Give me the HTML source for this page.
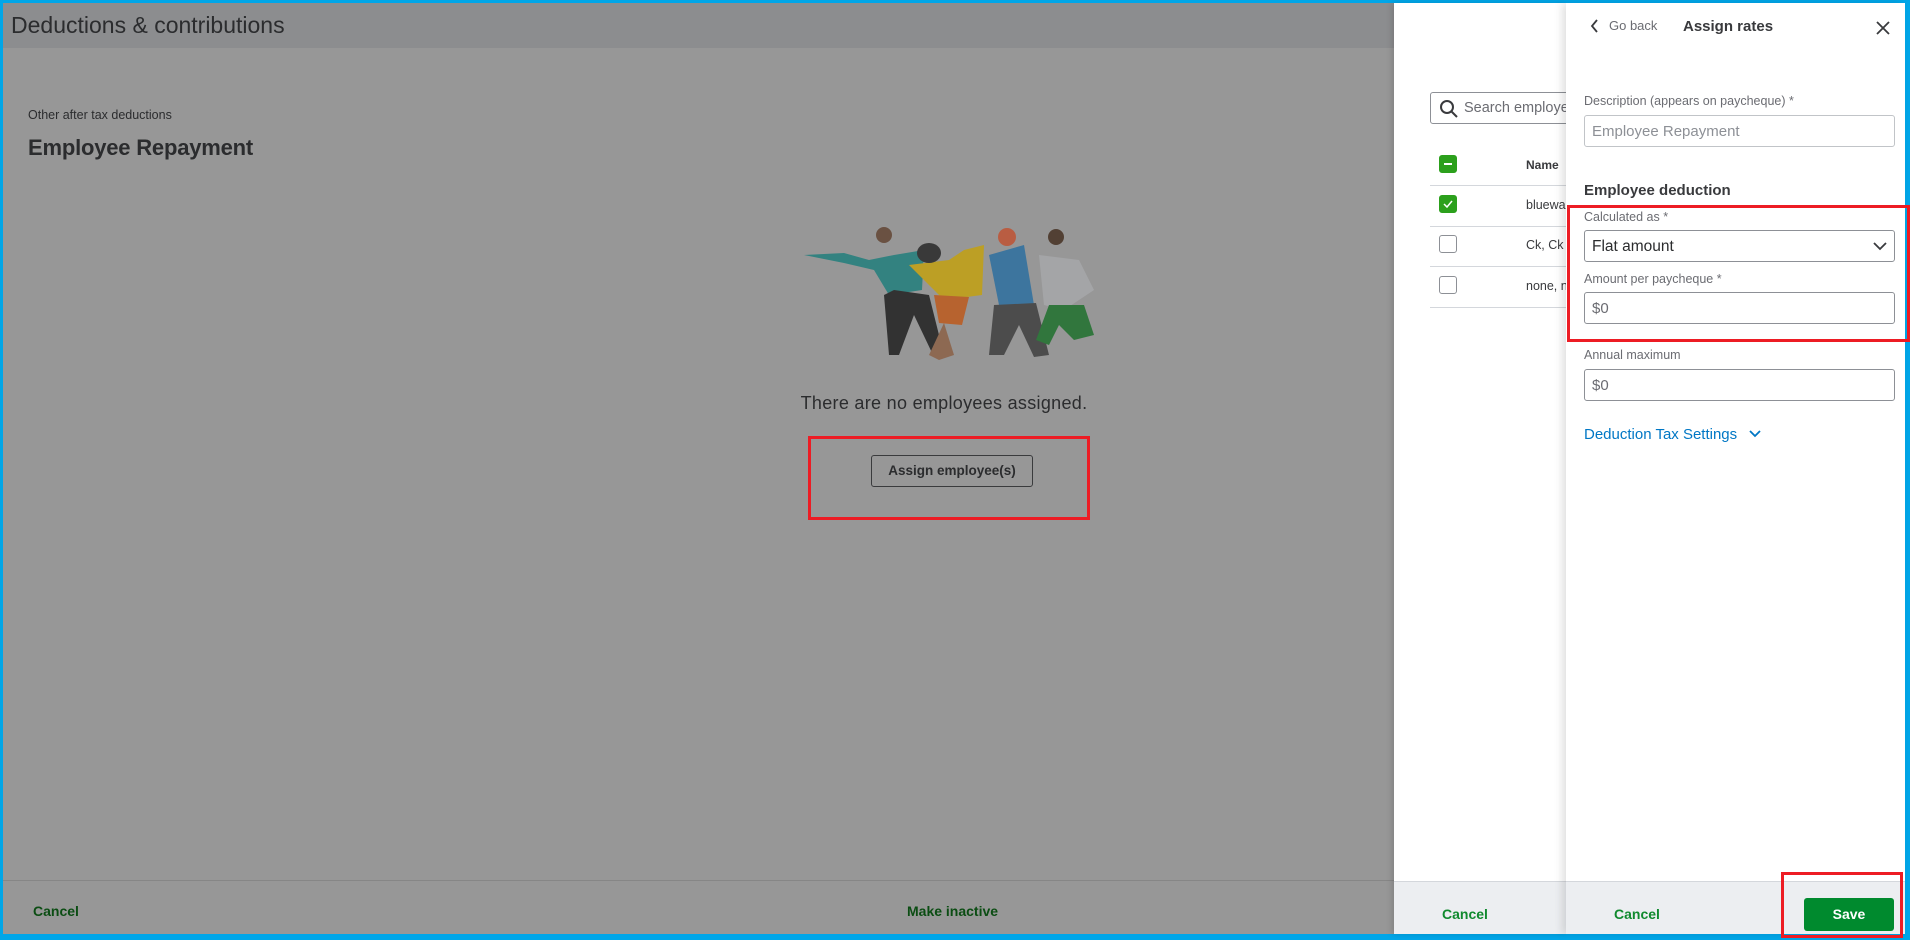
<!DOCTYPE html>
<html><head><meta charset="utf-8"><style>
*{box-sizing:border-box;margin:0;padding:0}
body{width:1910px;height:940px;background:#00a6e8;font-family:"Liberation Sans",sans-serif;position:relative;overflow:hidden}
.abs{position:absolute}
#left{left:3px;top:3px;width:1391px;height:931px;background:#979797}
#hdr{left:3px;top:3px;width:1391px;height:45px;background:#8c8d8f}
.t{position:absolute;white-space:nowrap}
#mid{left:1394px;top:3px;width:172px;height:931px;background:#fff;box-shadow:-2px 0 6px rgba(0,0,0,.15);overflow:hidden}
#right{left:1566px;top:3px;width:339px;height:931px;background:#fff;box-shadow:-4px 0 8px rgba(0,0,0,.12)}
.foot{position:absolute;top:878px;height:53px;background:#eceef1;border-top:1px solid #d4d7dc}
.inp{position:absolute;left:18px;width:311px;height:32px;border:1px solid #8d9096;border-radius:3px;font-size:15px;color:#6b6c72;padding:7px 7px}
.lbl{position:absolute;left:18px;font-size:12.5px;color:#6b6c72}
.cb{position:absolute;left:45px;width:18px;height:18px;border:1px solid #8d9096;border-radius:3px;background:#fff}
.cb.on{background:#2ca01c;border-color:#2ca01c}
.row{position:absolute;left:36px;width:136px;height:1px;background:#d4d7dc}
.nm{position:absolute;left:132px;font-size:12.5px;color:#393a3d;white-space:nowrap}
</style></head><body>
<div id="left" class="abs"></div>
<div id="hdr" class="abs"><div class="t" style="left:8px;top:9px;font-size:23px;color:#2b2c2e">Deductions &amp; contributions</div></div>
<div class="t" style="left:28px;top:108px;font-size:12.5px;color:#2b2c2e">Other after tax deductions</div>
<div class="t" style="left:28px;top:135px;font-size:22px;color:#2b2c2e;font-weight:bold;letter-spacing:-.2px">Employee Repayment</div>

<svg class="abs" style="left:804px;top:215px" width="300" height="150" viewBox="0 0 300 150">
 <g opacity=".75">
 <path d="M0 40 L40 38 L65 45 L90 40 L120 35 L118 75 L85 80 L70 55 L40 48Z" fill="#127c79"/>
 <circle cx="80" cy="20" r="8" fill="#5b3a26"/>
 <path d="M90 75 L125 80 L140 140 L130 142 L110 100 L95 140 L85 140 L80 80Z" fill="#111"/>
 <path d="M105 50 L145 45 L160 35 L180 30 L178 80 L140 85Z" fill="#c9a200"/>
 <ellipse cx="125" cy="38" rx="12" ry="10" fill="#1a1a1a"/>
 <path d="M130 80 L165 82 L158 110 L135 108Z" fill="#c2520d"/>
 <path d="M140 108 L150 140 L135 145 L125 140Z" fill="#8a5a3c"/>
 <path d="M185 40 L220 30 L230 90 L195 90Z" fill="#1f6aa1"/>
 <circle cx="203" cy="22" r="9" fill="#c54a26"/>
 <path d="M190 90 L232 88 L245 140 L230 142 L215 110 L200 140 L185 140Z" fill="#333"/>
 <path d="M235 40 L275 45 L290 75 L260 95 L240 90Z" fill="#a9aaad"/>
 <circle cx="252" cy="22" r="8" fill="#3b2414"/>
 <path d="M245 90 L280 90 L290 120 L270 125 L255 110 L245 130 L232 125Z" fill="#0f6b1f"/>
 </g>
</svg>
<div class="t" style="left:0;width:1888px;text-align:center;top:393px;font-size:18px;color:#2b2c2e;letter-spacing:.3px">There are no employees assigned.</div>
<div class="abs" style="left:871px;top:455px;width:162px;height:32px;border:1px solid #3a3b3d;border-radius:3px;font-size:13.5px;font-weight:bold;color:#2b2c2e;text-align:center;line-height:30px">Assign employee(s)</div>
<div class="abs" style="left:808px;top:436px;width:282px;height:84px;border:3px solid #ed1c24"></div>
<div class="abs" style="left:3px;top:880px;width:1391px;height:1px;background:#868686"></div>
<div class="t" style="left:33px;top:903px;font-size:14px;color:#0b4d13;font-weight:bold">Cancel</div>
<div class="t" style="left:907px;top:903px;font-size:14px;color:#0b4d13;font-weight:bold">Make inactive</div>

<div id="mid" class="abs">
 <div class="abs" style="left:36px;top:89px;width:150px;height:32px;border:1px solid #8d9096;border-radius:3px"></div>
 <svg class="abs" style="left:45px;top:96px" width="20" height="20"><circle cx="8" cy="8" r="6" fill="none" stroke="#393a3d" stroke-width="2"/><path d="M12.5 12.5 L18 18" stroke="#393a3d" stroke-width="2"/></svg>
 <div class="t" style="left:70px;top:97px;font-size:14.5px;color:#6b6c72">Search employe</div>
 <div class="cb on" style="top:152px"><div style="position:absolute;left:4px;top:7px;width:8px;height:2px;background:#fff"></div></div>
 <div class="nm" style="top:155px;font-weight:bold;font-size:12px">Name</div>
 <div class="row" style="top:182px"></div>
 <div class="cb on" style="top:192px"><svg width="16" height="16" style="position:absolute;left:0;top:0"><path d="M4 8 L7 11 L12 5" stroke="#fff" stroke-width="1.5" fill="none"/></svg></div>
 <div class="nm" style="top:195px">bluewa</div>
 <div class="row" style="top:223px"></div>
 <div class="cb" style="top:232px"></div>
 <div class="nm" style="top:235px">Ck, Ck</div>
 <div class="row" style="top:263px"></div>
 <div class="cb" style="top:273px"></div>
 <div class="nm" style="top:276px">none, n</div>
 <div class="row" style="top:304px"></div>
 <div class="foot" style="left:0;width:172px"><div class="t" style="left:48px;top:24px;font-size:14px;font-weight:bold;color:#108a2e">Cancel</div></div>
</div>

<div id="right" class="abs">
 <svg class="abs" style="left:22px;top:14px" width="14" height="18"><path d="M9 3 L4 9 L9 15" stroke="#393a3d" stroke-width="1.8" fill="none"/></svg>
 <div class="t" style="left:43px;top:15px;font-size:13px;color:#6b6c72">Go back</div>
 <div class="t" style="left:117px;top:15px;font-size:15px;font-weight:bold;color:#393a3d">Assign rates</div>
 <svg class="abs" style="left:309px;top:17px" width="16" height="16"><path d="M2 2 L14 14 M14 2 L2 14" stroke="#393a3d" stroke-width="1.8"/></svg>
 <div class="lbl" style="top:91px">Description (appears on paycheque) *</div>
 <div class="inp" style="top:112px;border-color:#c1c4c8;color:#8d9096">Employee Repayment</div>
 <div class="t" style="left:18px;top:179px;font-size:15px;font-weight:bold;color:#393a3d">Employee deduction</div>
 <div class="lbl" style="top:207px">Calculated as *</div>
 <div class="inp" style="top:227px;color:#2b2c2e;font-size:15.5px">Flat amount
  <svg style="position:absolute;right:6px;top:10px" width="16" height="10"><path d="M2 2 L8 8 L14 2" stroke="#393a3d" stroke-width="1.8" fill="none"/></svg></div>
 <div class="lbl" style="top:269px">Amount per paycheque *</div>
 <div class="inp" style="top:289px">$0</div>
 <div class="lbl" style="top:345px">Annual maximum</div>
 <div class="inp" style="top:366px">$0</div>
 <div class="t" style="left:18px;top:423px;font-size:15px;color:#0077c5">Deduction Tax Settings</div>
 <svg class="abs" style="left:183px;top:426px" width="12" height="10"><path d="M1 2 L6 7 L11 2" stroke="#0077c5" stroke-width="1.8" fill="none"/></svg>
 <div class="foot" style="left:0;width:339px"><div class="t" style="left:48px;top:24px;font-size:14px;font-weight:bold;color:#108a2e">Cancel</div>
  <div class="abs" style="left:238px;top:16px;width:90px;height:33px;background:#008a2e;border-radius:3px;color:#fff;font-weight:bold;font-size:14px;text-align:center;line-height:33px">Save</div></div>
</div>
<div class="abs" style="left:1567px;top:205px;width:343px;height:137px;border:3px solid #ed1c24"></div>
<div class="abs" style="left:1781px;top:872px;width:122px;height:66px;border:3px solid #ed1c24"></div>
</body></html>
